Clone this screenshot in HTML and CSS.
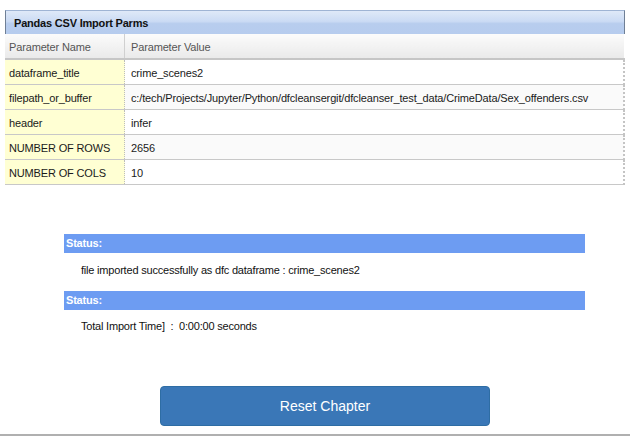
FILE: index.html
```html
<!DOCTYPE html>
<html>
<head>
<meta charset="utf-8">
<link rel="stylesheet" href="styles.css">
</head>
<body>
<div class="page">
  <div class="panel">
    <div class="panel-title">Pandas CSV Import Parms</div>
    <table class="parms">
      <thead>
        <tr><th class="c-name">Parameter Name</th><th class="c-val">Parameter Value</th></tr>
      </thead>
      <tbody>
        <tr><td class="c-name">dataframe_title</td><td class="c-val">crime_scenes2</td></tr>
        <tr class="alt"><td class="c-name">filepath_or_buffer</td><td class="c-val">c:/tech/Projects/Jupyter/Python/dfcleansergit/dfcleanser_test_data/CrimeData/Sex_offenders.csv</td></tr>
        <tr><td class="c-name">header</td><td class="c-val">infer</td></tr>
        <tr class="alt"><td class="c-name">NUMBER OF ROWS</td><td class="c-val">2656</td></tr>
        <tr><td class="c-name">NUMBER OF COLS</td><td class="c-val">10</td></tr>
      </tbody>
    </table>
  </div>

  <div class="status-block">
    <div class="status-bar">Status:</div>
    <div class="status-msg">file imported successfully as dfc dataframe : crime_scenes2</div>
    <div class="status-bar">Status:</div>
    <div class="status-msg">Total Import Time]&nbsp; :&nbsp; 0:00:00 seconds</div>
  </div>

  <div class="actions">
    <button class="btn-primary">Reset Chapter</button>
  </div>
  <div class="bottom-rule"></div>
</div>
</body>
</html>
```
FILE: styles.css
```css
html, body {
  margin: 0;
  padding: 0;
  background: #ffffff;
}
body {
  font-family: "Liberation Sans", Arial, sans-serif;
  font-size: 11px;
  letter-spacing: -0.15px;
  color: #222;
}
.page {
  width: 630px;
  height: 436px;
  display: flex;
  flex-direction: column;
}
.panel {
  margin: 10px 0 0 5px;
  width: 620px;
}
.panel-title {
  height: 23px;
  line-height: 25px;
  padding-left: 8px;
  font-weight: bold;
  letter-spacing: -0.2px;
  color: #111;
  border-top: 1px solid #9fb4d4;
  border-left: 1px solid #6f7f95;
  border-right: 1px solid #6f7f95;
  background: linear-gradient(#dfe9f8 0%, #cbdbf4 45%, #b8cdee 55%, #b6ccee 100%);
}
.parms {
  width: 620px;
  border-collapse: collapse;
  table-layout: fixed;
}
.parms th {
  height: 23px;
  text-align: left;
  font-weight: normal;
  color: #555;
  padding: 1px 0 0 4px;
  background: linear-gradient(#fbfbfb, #eaeaea);
  border-bottom: 2px solid #c6c6c6;
}
.parms th.c-name {
  width: 115px;
  border-right: 1px solid #d0d0d0;
}
.parms th.c-val {
  padding-left: 6px;
}
.parms td {
  height: 23px;
  padding: 1px 0 0 4px;
  border-bottom: 1px solid #c8c8c8;
  white-space: nowrap;
  color: #1a1a1a;
}
.parms td.c-name {
  background: #ffffd3;
  border-right: 1px dotted #bdbdbd;
}
.parms td.c-val {
  padding-left: 6px;
  background: #ffffff;
  border-right: 2px dotted #c4c4c4;
}
.parms tr.alt td.c-val {
  background: #fafafa;
}
.status-block {
  margin: 49px 0 0 64px;
  width: 521px;
  letter-spacing: -0.2px;
}
.status-bar {
  height: 19px;
  line-height: 19px;
  background: #6d9cf2;
  color: #fff;
  font-weight: bold;
  padding-left: 2px;
}
.status-msg {
  height: 38px;
  line-height: 34px;
  padding-left: 17px;
  color: #111;
}
.status-msg:last-child {
  height: 20px;
  line-height: 32px;
}
.actions {
  margin-top: 56px;
  display: flex;
  padding-left: 160px;
}
.btn-primary {
  width: 330px;
  height: 40px;
  background: #3a77b7;
  border: 1px solid #2e6da4;
  border-radius: 4px;
  color: #fff;
  font-family: "Liberation Sans", Arial, sans-serif;
  font-size: 14px;
}
.bottom-rule {
  margin-top: 8px;
  height: 2px;
  background: #b0b0b0;
}
```
